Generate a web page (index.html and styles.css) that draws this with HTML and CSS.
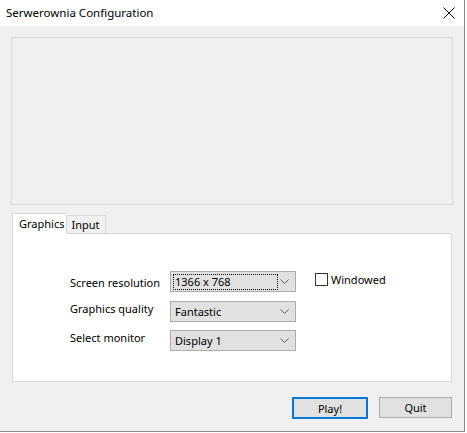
FILE: index.html
```html
<!DOCTYPE html>
<html>
<head>
<meta charset="utf-8">
<link rel="stylesheet" href="styles.css">
</head>
<body>
<div class="window">
  <div class="titlebar">
    <span class="title">Serwerownia Configuration</span>
    <svg class="close" width="12" height="12" viewBox="0 0 12 12"><path d="M0.5 0.5 L11.5 11.5 M11.5 0.5 L0.5 11.5" stroke="#000" stroke-width="1" fill="none"/></svg>
  </div>
  <div class="body">
    <div class="banner"></div>
    <div class="tabs">
      <div class="tab active">Graphics</div>
      <div class="tab">Input</div>
    </div>
    <div class="panel">
      <div class="grid">
        <div class="label l1">Screen resolution</div>
        <div class="combo"><span class="val focus">1366 x 768</span><svg class="chev" width="9" height="5" viewBox="0 0 9 5"><path d="M0.5 0.5 L4.5 4.5 L8.5 0.5" stroke="#606060" fill="none"/></svg></div>
        <label class="check"><span class="box"></span>Windowed</label>
        <div class="label l2">Graphics quality</div>
        <div class="combo r2"><span class="val">Fantastic</span><svg class="chev" width="9" height="5" viewBox="0 0 9 5"><path d="M0.5 0.5 L4.5 4.5 L8.5 0.5" stroke="#606060" fill="none"/></svg></div>
        <div></div>
        <div class="label l3">Select monitor</div>
        <div class="combo"><span class="val">Display 1</span><svg class="chev" width="9" height="5" viewBox="0 0 9 5"><path d="M0.5 0.5 L4.5 4.5 L8.5 0.5" stroke="#606060" fill="none"/></svg></div>
        <div></div>
      </div>
    </div>
    <div class="buttons">
      <button class="btn primary">Play!</button>
      <button class="btn">Quit</button>
    </div>
  </div>
</div>
</body>
</html>
```

FILE: styles.css
```css
html, body {
  margin: 0;
  padding: 0;
  background: #ffffff;
}
body {
  font-family: "Noto Sans", "DejaVu Sans", sans-serif;
  font-size: 11px;
  color: #000;
  width: 467px;
  height: 433px;
  overflow: hidden;
}
.window {
  width: 464px;
  height: 431px;
  border-right: 1px solid #8a8a8a;
  border-bottom: 1px solid #8a8a8a;
  background: #f0f0f0;
  display: flex;
  flex-direction: column;
}
.titlebar {
  height: 26px;
  background: #ffffff;
  display: flex;
  align-items: center;
  justify-content: space-between;
  padding: 0 9px 0 6px;
  flex: none;
}
.title {
  font-size: 11.5px;
  position: relative;
  top: -1px;
}
.close {
  display: block;
}
.body {
  flex: 1;
  padding: 11px 11px 0 11px;
  display: flex;
  flex-direction: column;
}
.banner {
  height: 166px;
  border: 1px solid #dcdcdc;
  background: #f0f0f0;
  flex: none;
}
.tabs {
  display: flex;
  align-items: flex-end;
  margin-top: 8px;
  padding-left: 1px;
  height: 20px;
  position: relative;
  z-index: 1;
}
.tab {
  border: 1px solid #d9d9d9;
  border-bottom: none;
  background: #f0f0f0;
  height: 18px;
  line-height: 18px;
  padding: 0 5px 0 4px;
  box-sizing: border-box;
}
.tab.active {
  background: #ffffff;
  height: 21px;
  line-height: 19px;
  padding: 0 2px 0 6px;
  margin-bottom: -1px;
  border-right: none;
}
.panel {
  margin-left: 1px;
  width: 440px;
  height: 149px;
  box-sizing: border-box;
  border: 1px solid #d9d9d9;
  background: #ffffff;
  flex: none;
  padding: 37px 0 0 57px;
}
.grid {
  display: grid;
  grid-template-columns: 100px 126px auto;
  row-gap: 8px;
  column-gap: 0;
  align-items: center;
}
.label {
  align-self: start;
  padding-top: 3px;
}
.l1 { padding-top: 4px; }
.l2 { padding-top: 1px; }
.l3 { padding-top: 0; }
.r2 { margin-top: 1px; }
.combo {
  height: 21px;
  box-sizing: border-box;
  border: 1px solid #adadad;
  background: #e1e1e1;
  display: flex;
  align-items: center;
  justify-content: space-between;
  padding: 0 6px 0 2px;
}
.val {
  padding: 0 1px;
  line-height: 14px;
  border: 1px dotted transparent;
  flex: none;
}
.val.focus {
  border-color: #000;
  width: 101px;
}
.chev { display: block; }
.check {
  display: flex;
  align-items: center;
  gap: 3px;
  align-self: start;
  margin-top: 1px;
  margin-left: 19px;
}
.box {
  width: 13px;
  height: 13px;
  box-sizing: border-box;
  border: 1px solid #333;
  background: #fff;
}
.buttons {
  display: flex;
  justify-content: flex-end;
  gap: 11px;
  margin-top: 15px;
  padding-right: 1px;
}
.btn {
  font-family: "Noto Sans", "DejaVu Sans", sans-serif;
  font-size: 11px;
  width: 73px;
  height: 21px;
  box-sizing: border-box;
  border: 1px solid #adadad;
  background: #e1e1e1;
  padding: 0;
  color: #000;
}
.btn.primary {
  width: 76px;
  height: 22px;
  border: 2px solid #0078d7;
}
```
